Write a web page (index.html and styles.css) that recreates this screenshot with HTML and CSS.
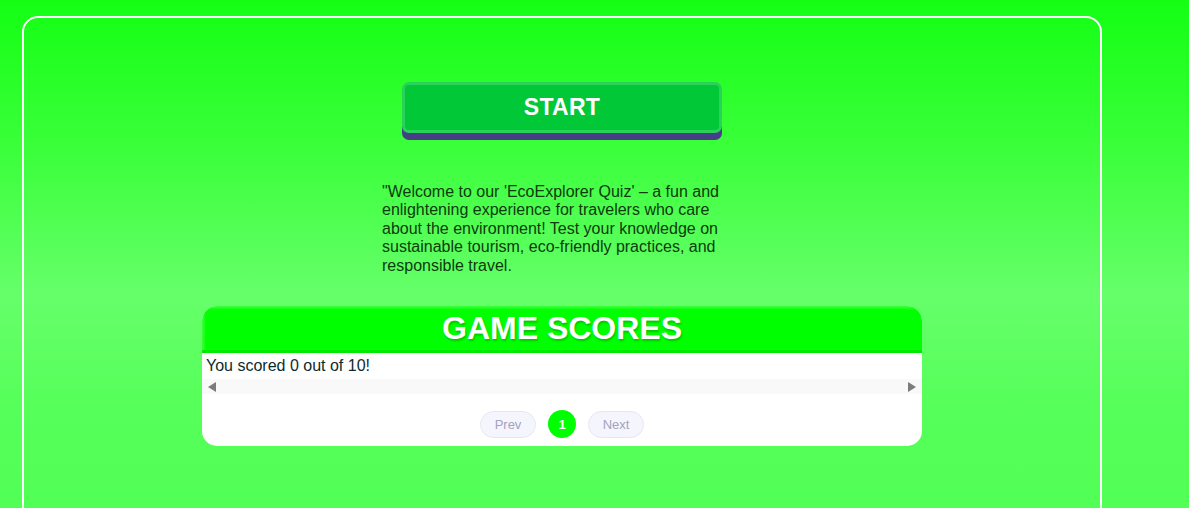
FILE: index.html
```html
<!DOCTYPE html>
<html lang="en">
<head>
<meta charset="utf-8">
<title>EcoExplorer Quiz</title>
<link rel="stylesheet" href="styles.css">
</head>
<body>
<main class="frame">
  <button class="start-btn" type="button">START</button>
  <p class="intro">"Welcome to our 'EcoExplorer Quiz' – a fun and enlightening experience for travelers who care about the environment! Test your knowledge on sustainable tourism, eco-friendly practices, and responsible travel.</p>
  <section class="scores">
    <h2 class="scores-title">GAME SCORES</h2>
    <div class="scores-body">
      <div class="score-line">You scored 0 out of 10!</div>
      <div class="hscroll">
        <span class="arrow arrow-left"></span>
        <span class="arrow arrow-right"></span>
      </div>
    </div>
    <nav class="pager">
      <button class="pill" type="button">Prev</button>
      <span class="page-dot">1</span>
      <button class="pill" type="button">Next</button>
    </nav>
  </section>
</main>
</body>
</html>
```

FILE: styles.css
```css
html, body {
  margin: 0;
  padding: 0;
  height: 100%;
}
body {
  background: linear-gradient(180deg, #14ff14 0%, #3cff3c 30%, #66ff6a 58%, #56ff5a 80%, #52ff56 100%);
  font-family: "Liberation Sans", Arial, sans-serif;
  overflow: hidden;
}
.frame {
  box-sizing: border-box;
  width: 1080px;
  margin: 16px 0 0 22px;
  height: calc(100vh - 16px + 20px);
  border: 2px solid #ffffff;
  border-radius: 16px;
  padding-top: 64px;
  display: flex;
  flex-direction: column;
  align-items: center;
}
.start-btn {
  box-sizing: border-box;
  width: 320px;
  height: 51px;
  margin: 0;
  border: 3px solid #2bd25a;
  border-radius: 7px;
  background: #00c837;
  color: #ffffff;
  font-family: "Liberation Sans", Arial, sans-serif;
  font-weight: bold;
  font-size: 23px;
  letter-spacing: 0.3px;
  box-shadow: 0 7px 0 #463f88;
  cursor: pointer;
  padding: 0;
}
.intro {
  width: 360px;
  margin: 50px 0 0;
  font-size: 16px;
  line-height: 18.4px;
  color: #0d3b0d;
}
.scores {
  width: 720px;
  margin-top: 31px;
  background: #ffffff;
  border-radius: 15px;
  overflow: hidden;
  padding-bottom: 8px;
}
.scores-title {
  margin: 0;
  height: 47px;
  box-sizing: border-box;
  background: #00ff00;
  border-bottom: 3px solid #00ea00;
  color: #ffffff;
  font-size: 32px;
  font-weight: bold;
  line-height: 45px;
  text-align: center;
  text-shadow: 1px 2px 2px rgba(0, 120, 0, 0.4);
  box-shadow: inset 2px 2px 3px rgba(255, 255, 255, 0.25);
}
.scores-body {
  padding: 3px 0 0;
}
.score-line {
  padding-left: 4px;
  font-size: 16px;
  line-height: 20px;
  color: #0c2c2c;
}
.hscroll {
  height: 15px;
  margin-top: 3px;
  background: #f9f9f9;
  display: flex;
  justify-content: space-between;
  align-items: center;
  padding: 0 6px;
}
.arrow {
  width: 0;
  height: 0;
  border-top: 5px solid transparent;
  border-bottom: 5px solid transparent;
}
.arrow-left {
  border-right: 8px solid #7c7c7c;
}
.arrow-right {
  border-left: 8px solid #7c7c7c;
}
.pager {
  display: flex;
  justify-content: center;
  align-items: center;
  gap: 12px;
  margin-top: 16px;
}
.pill {
  box-sizing: border-box;
  width: 56px;
  height: 27px;
  margin: 0;
  padding: 0;
  border: 1px solid #e6e6f2;
  border-radius: 14px;
  background: #f5f5fd;
  color: #a3a3c0;
  font-family: "Liberation Sans", Arial, sans-serif;
  font-size: 13px;
}
.page-dot {
  width: 28px;
  height: 28px;
  border-radius: 50%;
  background: #00ff00;
  color: #ffffff;
  font-weight: bold;
  font-size: 13px;
  display: flex;
  align-items: center;
  justify-content: center;
}
```
